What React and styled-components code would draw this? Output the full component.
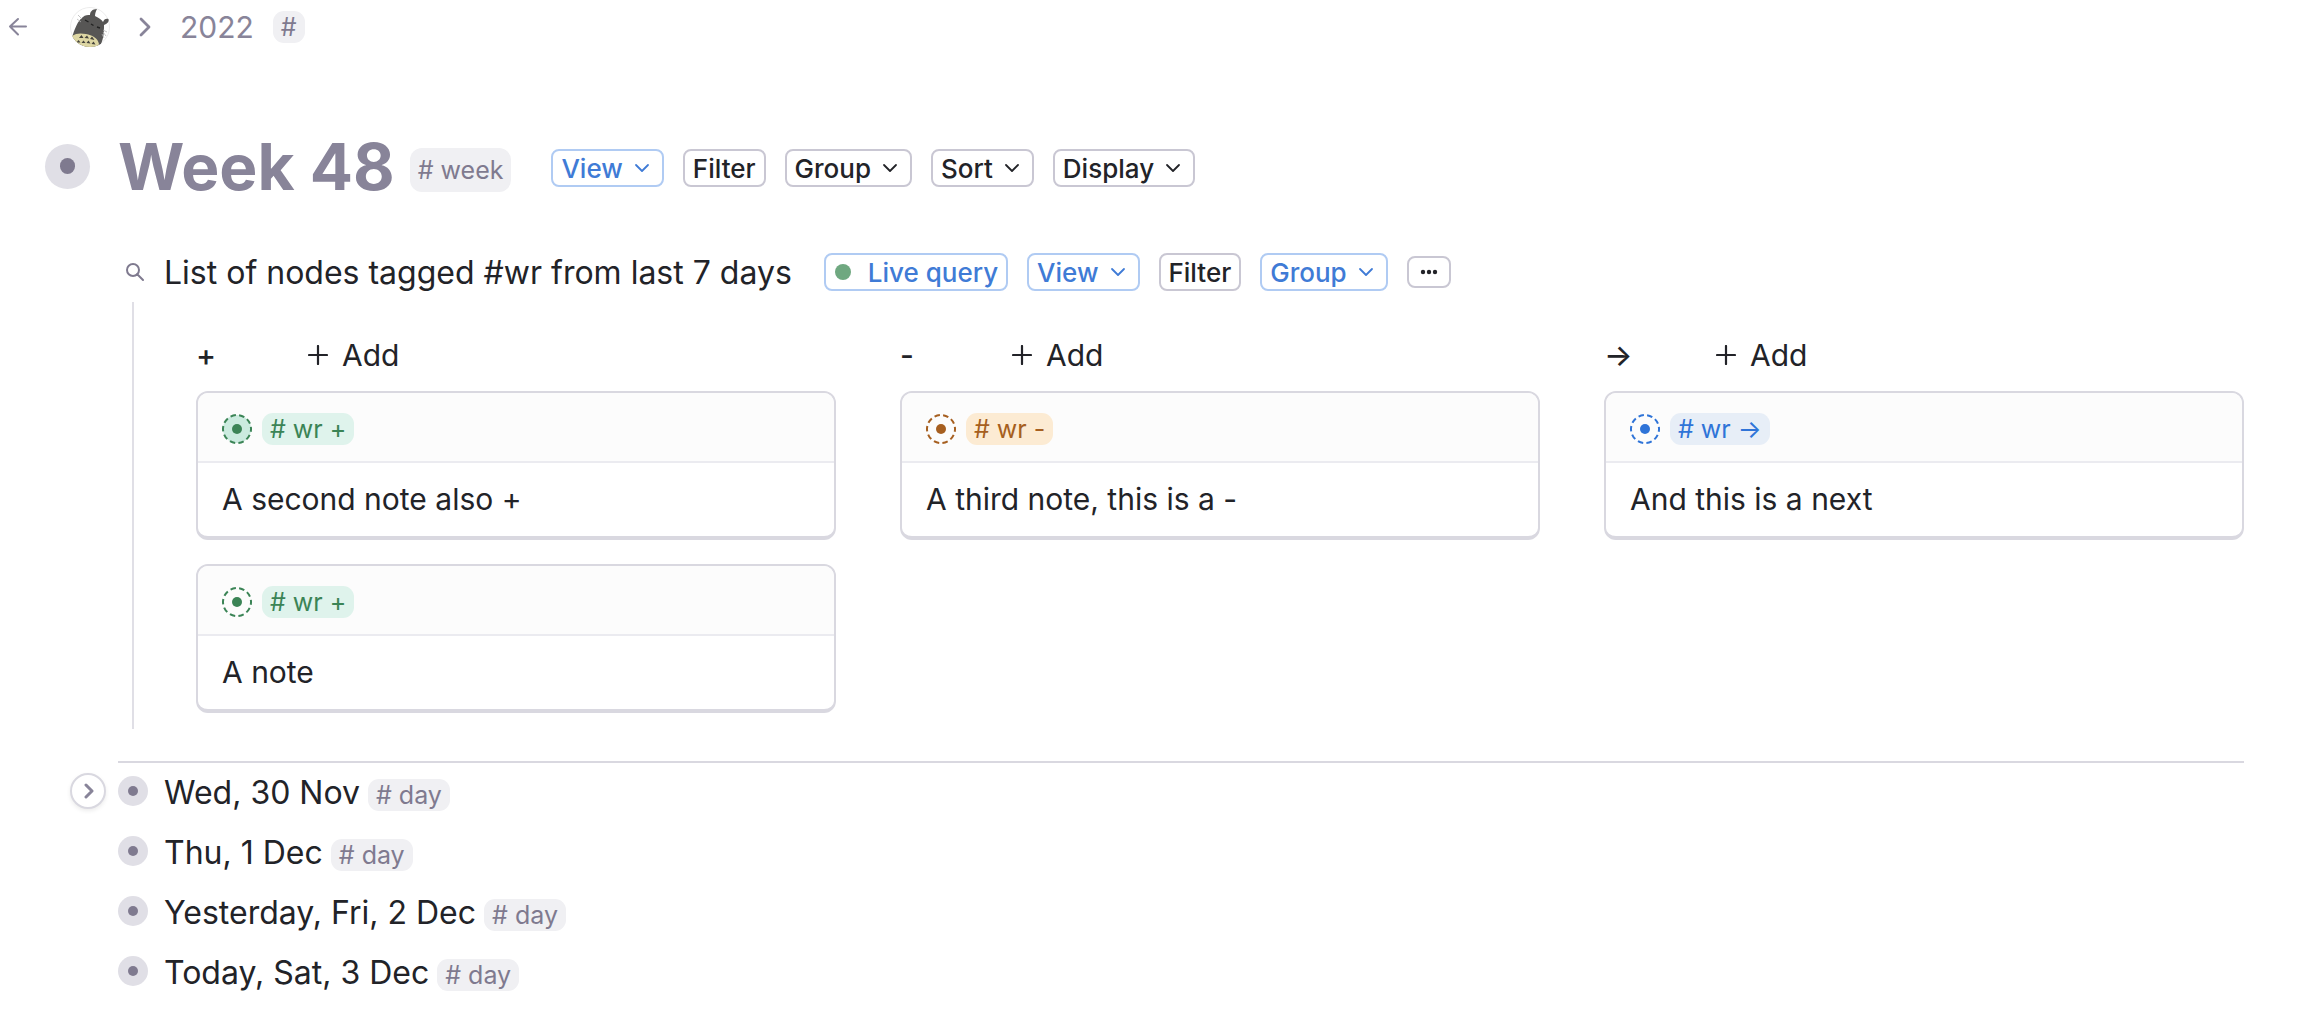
import React from "react";
import styled, { createGlobalStyle } from "styled-components";

const GlobalStyle = createGlobalStyle`
  * {
    box-sizing: border-box;
  }
  body {
    margin: 0;
    background: #ffffff;
    color: #222328;
    font-family: Inter, "Liberation Sans", sans-serif;
    font-size: 32px;
  }
  button {
    font-family: inherit;
    cursor: pointer;
  }
  h1, h2, h3, p, ul {
    margin: 0;
    padding: 0;
    font-weight: 400;
  }
`;

const tones = {
  grey: { text: "#7f7a8f", tag: "#f0f0f3", ring: "#e0dfe6" },
  green: { text: "#3b8456", tag: "#dff3ec", ring: "#cbebdf" },
  orange: { text: "#a65f20", tag: "#fcebd3", ring: "#fce0bb" },
  blue: { text: "#2f74d8", tag: "#e7eef7", ring: "#d3e2f8" },
};

const Page = styled.div`
  padding-right: 56px;
`;
const TopBar = styled.nav`
  display: flex;
  align-items: center;
  height: 54px;
  padding-left: 8px;
  color: #888499;
`;
const IconButton = styled.button`
  display: flex;
  padding: 0;
  border: none;
  background: none;
  color: inherit;
`;
const Avatar = styled.a`
  display: flex;
  margin: 0 29px 0 42px;
`;
const Crumb = styled.a`
  margin: 0 19px 0 29px;
  color: inherit;
  font-size: 30px;
  text-decoration: none;
`;
const Tag = styled.span`
  display: inline-flex;
  align-items: center;
  height: 32px;
  padding: 0 8px;
  border-radius: 11px;
  background: ${({ $tone }) => tones[$tone || "grey"].tag};
  color: ${({ $tone }) => tones[$tone || "grey"].text};
  font-size: 25px;
  white-space: pre;
`;
const TitleTag = styled(Tag)`
  height: 44px;
  margin-top: 4px;
  border-radius: 12px;
`;
const Heading = styled.header`
  display: flex;
  align-items: center;
  margin-top: 76px;
  padding-left: 45px;
  height: 76px;
`;
const Title = styled.h1`
  margin: 0 15px 2px 28px;
  color: #888499;
  font-size: 64px;
  font-weight: 700;
  line-height: 76px;
`;
const Toolbar = styled.div`
  display: flex;
  align-items: center;
  gap: 19px;
  margin-left: ${({ $gap }) => $gap}px;
`;
const ToolButton = styled.button`
  display: flex;
  align-items: center;
  height: 38px;
  padding: 0 8px;
  border: 2px solid ${({ $active }) => ($active ? "#b0cbf3" : "#c9c7d3")};
  border-radius: 8px;
  background: #ffffff;
  color: ${({ $active }) => ($active ? "#3f7bd6" : "#222328")};
  font-size: 26px;
  font-weight: 500;
`;
const MenuButton = styled(ToolButton)`
  gap: 10px;
  padding-right: 11px;
`;
const MoreButton = styled(ToolButton)`
  justify-content: center;
  width: 44px;
  height: 32px;
`;
const LiveDot = styled.span`
  width: 16px;
  height: 16px;
  margin: 0 17px 0 1px;
  border-radius: 50%;
  background: #6fa880;
`;
const Body = styled.main`
  margin-left: 118px;
`;
const QueryRow = styled.div`
  display: flex;
  align-items: center;
  height: 60px;
  margin-top: 36px;
  padding-left: 8px;
  color: #7f7a8f;
`;
const QueryTitle = styled.h2`
  margin-left: 20px;
  color: #222328;
  font-size: 32px;
`;
const Board = styled.section`
  display: grid;
  grid-template-columns: repeat(3, 1fr);
  gap: 64px;
  margin-left: 14px;
  padding: 29px 0 16px 62px;
  border-left: 2px solid #e0dfe6;
`;
const ColumnHead = styled.div`
  display: flex;
  align-items: center;
  height: 48px;
  margin-bottom: 12px;
`;
const ColumnName = styled.h3`
  width: 112px;
  font-size: 30px;
  font-weight: 500;
`;
const AddButton = styled(IconButton)`
  align-items: center;
  gap: 14px;
  color: #222328;
  font-size: 30px;
`;
const Cards = styled.div`
  display: flex;
  flex-direction: column;
  gap: 24px;
`;
const Card = styled.article`
  overflow: hidden;
  border: 2px solid #d9d8e0;
  border-bottom-width: 4px;
  border-radius: 12px;
`;
const CardHead = styled.div`
  display: flex;
  align-items: center;
  gap: 10px;
  height: 70px;
  padding: 4px 24px 0;
  border-bottom: 2px solid #ebebf0;
  background: #fcfcfc;
`;
const CardText = styled.p`
  padding: 0 24px;
  font-size: 30px;
  line-height: 73px;
`;
const Days = styled.ul`
  display: flex;
  flex-direction: column;
  gap: 4px;
  margin-top: 32px;
  border-top: 2px solid #d9d8e0;
  list-style: none;
`;
const Day = styled.li`
  position: relative;
  display: flex;
  align-items: center;
  height: 56px;
`;
const DayName = styled.span`
  margin: 2px 8px 0 16px;
`;
const DayTag = styled(Tag)`
  margin-top: 8px;
`;
const Bullet = styled.span`
  display: flex;
  align-items: center;
  justify-content: center;
  flex: none;
  width: 30px;
  height: 30px;
  border-radius: 50%;
  background: #e0dfe6;

  &::after {
    content: "";
    width: 34%;
    height: 34%;
    border-radius: 50%;
    background: #7f7a8f;
  }
`;
const TitleBullet = styled(Bullet)`
  width: 45px;
  height: 45px;
  margin-bottom: 4px;
`;
const Expand = styled.button`
  position: absolute;
  left: -48px;
  display: flex;
  align-items: center;
  justify-content: center;
  width: 36px;
  height: 36px;
  padding: 0;
  border: 2px solid #d9d8e0;
  border-radius: 50%;
  background: #ffffff;
  color: #888499;
  box-shadow: 0 2px 4px rgba(0, 0, 0, 0.08);
`;

const Stroke = ({ width, height, d, weight = 2 }) => (
  <svg
    width={width}
    height={height}
    viewBox={`0 0 ${width} ${height}`}
    fill="none"
    stroke="currentColor"
    strokeWidth={weight}
    strokeLinecap="round"
    strokeLinejoin="round"
    aria-hidden="true"
  >
    <path d={d} />
  </svg>
);

const BackIcon = () => (
  <Stroke width={20} height={20} d="M18 9.5H2M10 2L2 9.5L10 17.5" />
);
const ChevronRight = ({ small }) =>
  small ? (
    <Stroke width={12} height={16} weight={3} d="M4 2L10 8L4 14" />
  ) : (
    <Stroke width={12} height={20} weight={2.8} d="M2 2L10 10L2 18" />
  );
const ChevronDown = () => (
  <Stroke width={18} height={12} weight={1.8} d="M3 3L9 9L15 3" />
);
const PlusIcon = () => (
  <Stroke width={20} height={20} weight={2.2} d="M10 1V19M1 10H19" />
);
const SearchIcon = () => (
  <Stroke
    width={18}
    height={20}
    d="M13 8A6 6 0 1 1 1 8A6 6 0 1 1 13 8M11 12L17 18"
  />
);
const DotsIcon = () => (
  <svg width="18" height="6" viewBox="0 0 18 6" fill="currentColor">
    <circle cx="3" cy="3" r="2.2" />
    <circle cx="9" cy="3" r="2.2" />
    <circle cx="15" cy="3" r="2.2" />
  </svg>
);

const TotoroIcon = () => (
  <svg width="40" height="40" viewBox="0 0 40 40">
    <defs>
      <clipPath id="avatar">
        <circle cx="20" cy="20" r="20" />
      </clipPath>
    </defs>
    <circle cx="20" cy="20" r="19.5" fill="#fff" stroke="#ececec" />
    <g clipPath="url(#avatar)">
      <path
        d="M2 31C4 23 8 13 13 10C15 8 18 8 20 8C20 5 22 2 27 2C26 4 25 6 25 9C29 11 32 13 33 15C34 12 36 11 39 12C39 15 37 17 34 18C34 24 34 30 31 37L28 41H6Z"
        fill="#575655"
      />
      <path
        d="M2 29C6 26 11 26 16 27C22 28 28 31 29 37L27 41H6Z"
        fill="#ddd6a3"
      />
      <path
        d="M9 31L11.5 28L13.5 31ZM14.5 31L17 28.5L19 31.5ZM20 32L22 29.5L24.5 33ZM6.5 35.5L8.5 33L10.5 35.5ZM11.5 36L13.5 33.5L15.5 36ZM16.5 36L18.5 33.5L20.5 36.5ZM21.5 37L23.5 34.5L25.5 37.5Z"
        fill="#45433c"
      />
      <path
        d="M15 13L18.5 15M27 20L30 21M21 17L23.5 18.5"
        stroke="#222"
        strokeWidth="1.4"
      />
      <path
        d="M12 12L8 8M11 15L7 12M33 23L37 25M33 25L36 29M32 27L34 31"
        stroke="#b5b5b5"
        strokeWidth="0.8"
      />
    </g>
  </svg>
);

const TagBullet = ({ tone, filled }) => (
  <svg width="30" height="30" viewBox="0 0 30 30">
    <circle
      cx="15"
      cy="15"
      r="14"
      fill={filled ? tones[tone].ring : "none"}
      stroke={tones[tone].text}
      strokeWidth="2"
      strokeDasharray="5.5 3.3"
      strokeDashoffset="2.7"
    />
    <circle cx="15" cy="15" r="5" fill={tones[tone].text} />
  </svg>
);

const DropButton = ({ label, active }) => (
  <MenuButton $active={active}>
    {label}
    <ChevronDown />
  </MenuButton>
);

const columns = [
  {
    name: "+",
    tone: "green",
    cards: [{ text: "A second note also +", filled: true }, { text: "A note" }],
  },
  { name: "-", tone: "orange", cards: [{ text: "A third note, this is a -" }] },
  { name: "→", tone: "blue", cards: [{ text: "And this is a next" }] },
];

const days = ["Wed, 30 Nov", "Thu, 1 Dec", "Yesterday, Fri, 2 Dec", "Today, Sat, 3 Dec"];

const App = () => {
  return (
    <Page>
      <GlobalStyle />
      <TopBar>
        <IconButton aria-label="Back">
          <BackIcon />
        </IconButton>
        <Avatar href="#" aria-label="Home">
          <TotoroIcon />
        </Avatar>
        <ChevronRight />
        <Crumb href="#">2022</Crumb>
        <Tag>#</Tag>
      </TopBar>

      <Heading>
        <TitleBullet />
        <Title>Week 48</Title>
        <TitleTag># week</TitleTag>
        <Toolbar $gap={40}>
          <DropButton label="View" active />
          <ToolButton>Filter</ToolButton>
          <DropButton label="Group" />
          <DropButton label="Sort" />
          <DropButton label="Display" />
        </Toolbar>
      </Heading>

      <Body>
        <QueryRow>
          <SearchIcon />
          <QueryTitle>List of nodes tagged #wr from last 7 days</QueryTitle>
          <Toolbar $gap={32}>
            <ToolButton $active>
              <LiveDot />
              Live query
            </ToolButton>
            <DropButton label="View" active />
            <ToolButton>Filter</ToolButton>
            <DropButton label="Group" active />
            <MoreButton aria-label="More">
              <DotsIcon />
            </MoreButton>
          </Toolbar>
        </QueryRow>

        <Board>
          {columns.map(({ name, tone, cards }) => (
            <div key={name}>
              <ColumnHead>
                <ColumnName>{name}</ColumnName>
                <AddButton>
                  <PlusIcon />
                  Add
                </AddButton>
              </ColumnHead>
              <Cards>
                {cards.map(({ text, filled }) => (
                  <Card key={text}>
                    <CardHead>
                      <TagBullet tone={tone} filled={filled} />
                      <Tag $tone={tone}># wr {name}</Tag>
                    </CardHead>
                    <CardText>{text}</CardText>
                  </Card>
                ))}
              </Cards>
            </div>
          ))}
        </Board>

        <Days>
          {days.map((day, i) => (
            <Day key={day}>
              {i === 0 && (
                <Expand aria-label="Expand">
                  <ChevronRight small />
                </Expand>
              )}
              <Bullet />
              <DayName>{day}</DayName>
              <DayTag># day</DayTag>
            </Day>
          ))}
        </Days>
      </Body>
    </Page>
  );
};

export default App;
